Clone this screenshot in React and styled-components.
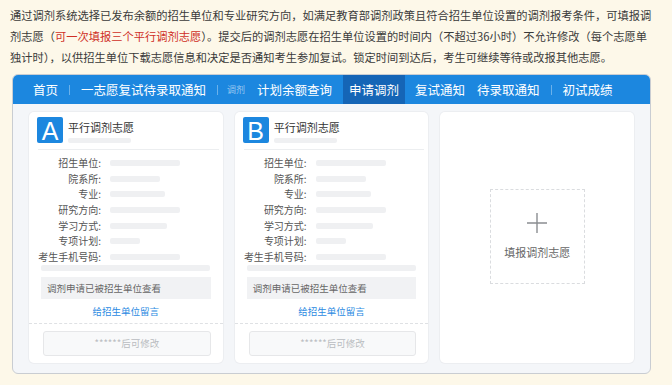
import React from "react";
import styled, { createGlobalStyle } from "styled-components";

const Global = createGlobalStyle`
  body {
    margin: 0;
    background: #fdf8e9;
    font-family: "Noto Sans CJK SC", "Noto Sans", sans-serif;
    color: #333;
  }
`;

const Page = styled.div`
  width: 672px;
  height: 385px;
  overflow: hidden;
`;

const Intro = styled.p`
  margin: 0;
  padding: 5px 0 0 10px;
  font-size: 11.25px;
  line-height: 21px;
  white-space: nowrap;
  color: #3a3a3a;
`;

const Red = styled.span`
  color: #cf2f26;
`;

const Panel = styled.div`
  margin: 6px 21px 0 12px;
  border: 1px solid #c9cdd2;
  border-radius: 6px;
  overflow: hidden;
  background: #f4f6f9;
`;

const Nav = styled.div`
  display: flex;
  align-items: stretch;
  height: 29px;
  padding-left: 14px;
  background: #1c87df;
`;

const NavItem = styled.div`
  display: flex;
  align-items: center;
  padding: 0 ${(p) => (p.$small ? 4 : 6)}px;
  font-size: ${(p) => (p.$small ? 9 : 12.5)}px;
  color: ${(p) => (p.$small ? "rgba(255,255,255,0.55)" : "#fff")};
  background: ${(p) => (p.$active ? "#1565b6" : "transparent")};
  margin-right: ${(p) => p.$mr || 0}px;
`;

const Sep = styled.span`
  align-self: center;
  width: 1px;
  height: 10px;
  margin: 0 5px;
  background: rgba(255, 255, 255, 0.35);
`;

const Body = styled.div`
  display: grid;
  grid-template-columns: repeat(3, 1fr);
  gap: 12px;
  padding: 8px 16px 10px;
`;

const Card = styled.div`
  height: 251px;
  background: #fff;
  border-radius: 5px;
  box-shadow: 0 0 0 1px #eceef1;
  display: flex;
  flex-direction: column;
`;

const Head = styled.div`
  display: flex;
  gap: 5px;
  padding: 5px 8px 0;
  height: 32px;
`;

const Badge = styled.div`
  width: 26px;
  height: 26px;
  border-radius: 2px;
  background: #1c87df;
  color: #fff;
  font-family: "Liberation Sans", Arial, sans-serif;
  font-size: 25px;
  line-height: 28px;
  text-align: center;
`;

const TitleBox = styled.div`
  display: flex;
  flex-direction: column;
  padding-top: 3px;
`;

const Title = styled.div`
  font-size: 11px;
  line-height: 15px;
  color: #333;
`;

const Bar = styled.div`
  height: ${(p) => p.$h || 6}px;
  width: ${(p) => p.$w}px;
  border-radius: 2px;
  background: #eff0f2;
  margin-top: ${(p) => p.$mt || 0}px;
`;

const Divider = styled.div`
  height: 1px;
  background: #eceef0;
  margin: 0 4px 0 9px;
`;

const Rows = styled.div`
  display: flex;
  flex-direction: column;
  padding-top: 5px;
`;

const Row = styled.div`
  display: grid;
  grid-template-columns: 72px 1fr;
  column-gap: 9px;
  align-items: center;
  height: 15.7px;
`;

const Label = styled.span`
  text-align: right;
  font-size: 10px;
  line-height: 14px;
  color: #555;
`;

const Inset = styled.div`
  margin: 0 12px;
`;

const Notice = styled.div`
  margin: 6px 12px 0;
  height: 22px;
  display: flex;
  align-items: center;
  padding-left: 6px;
  background: #f1f2f4;
  font-size: 9.5px;
  color: #666;
`;

const Link = styled.div`
  text-align: center;
  font-size: 9.5px;
  line-height: 14px;
  margin-top: 5px;
  color: #2b8ae2;
`;

const Dashed = styled.div`
  border-top: 1px dashed #dfe1e4;
  margin-top: 5px;
`;

const LockBtn = styled.div`
  margin: 7px 12px 0 14px;
  height: 23px;
  border: 1px solid #e6e7e9;
  border-radius: 3px;
  background: #f8f9fa;
  display: flex;
  align-items: center;
  justify-content: center;
  font-size: 9.5px;
  color: #b9bcc0;
`;

const EmptyCard = styled(Card)`
  align-items: center;
  justify-content: center;
`;

const AddBox = styled.div`
  width: 93px;
  height: 71px;
  margin-top: -3px;
  border: 1px dashed #dadcdf;
  display: flex;
  flex-direction: column;
  align-items: center;
  padding-top: 22px;
`;

const AddText = styled.div`
  margin-top: 10px;
  font-size: 11px;
  color: #666;
`;

const fields = [
  ["招生单位:", 70],
  ["院系所:", 50],
  ["专业:", 55],
  ["研究方向:", 70],
  ["学习方式:", 57],
  ["专项计划:", 30],
  ["考生手机号码:", 70],
];

const Choice = ({ letter }) => (
  <Card>
    <Head>
      <Badge>{letter}</Badge>
      <TitleBox>
        <Title>平行调剂志愿</Title>
        <Bar $w={63} $h={5} $mt={3} />
      </TitleBox>
    </Head>
    <Divider />
    <Rows>
      {fields.map(([label, w]) => (
        <Row key={label}>
          <Label>{label}</Label>
          <Bar $w={w} />
        </Row>
      ))}
    </Rows>
    <Inset>
      <Bar $w={169} $mt={0} />
    </Inset>
    <Notice>调剂申请已被招生单位查看</Notice>
    <Link>给招生单位留言</Link>
    <Dashed />
    <LockBtn>******后可修改</LockBtn>
  </Card>
);

const Plus = () => (
  <svg width="22" height="22" viewBox="0 0 22 22">
    <path d="M11 1v20M1 11h20" stroke="#8a8d91" strokeWidth="1.4" fill="none" />
  </svg>
);

export default function App() {
  return (
    <Page>
      <Global />
      <Intro>
        通过调剂系统选择已发布余额的招生单位和专业研究方向，如满足教育部调剂政策且符合招生单位设置的调剂报考条件，可填报调
        <br />
        剂志愿（<Red>可一次填报三个平行调剂志愿</Red>）。提交后的调剂志愿在招生单位设置的时间内（不超过36小时）不允许修改（每个志愿单
        <br />
        独计时），以供招生单位下载志愿信息和决定是否通知考生参加复试。锁定时间到达后，考生可继续等待或改报其他志愿。
      </Intro>
      <Panel>
        <Nav>
          <NavItem>首页</NavItem>
          <Sep />
          <NavItem>一志愿复试待录取通知</NavItem>
          <Sep />
          <NavItem $small $mr={2}>调剂</NavItem>
          <NavItem $mr={5}>计划余额查询</NavItem>
          <NavItem $active $mr={4}>申请调剂</NavItem>
          <NavItem>复试通知</NavItem>
          <NavItem>待录取通知</NavItem>
          <Sep />
          <NavItem>初试成绩</NavItem>
        </Nav>
        <Body>
          <Choice letter="A" />
          <Choice letter="B" />
          <EmptyCard>
            <AddBox>
              <Plus />
              <AddText>填报调剂志愿</AddText>
            </AddBox>
          </EmptyCard>
        </Body>
      </Panel>
    </Page>
  );
}
